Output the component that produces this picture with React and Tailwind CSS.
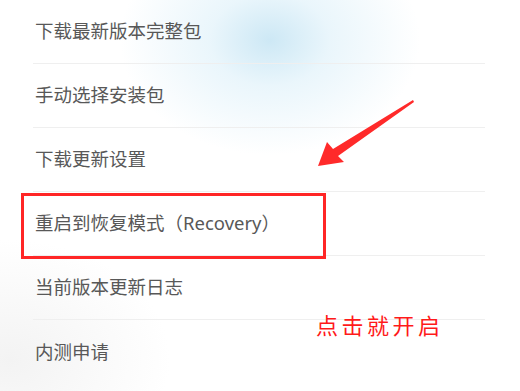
import React from 'react';

const items = [
  '下载最新版本完整包',
  '手动选择安装包',
  '下载更新设置',
  '重启到恢复模式（Recovery）',
  '当前版本更新日志',
  '内测申请',
];

const Arrow = () => (
  <svg className="absolute left-0 top-0" width="520" height="391" viewBox="0 0 520 391">
    <polygon
      points="413,100 333,149 327,142 318,166 344,162 338,156 414,102"
      fill="#ff2a2a"
    />
  </svg>
);

export default function App() {
  return (
    <div
      className="relative w-[520px] h-[391px] overflow-hidden bg-white"
      style={{ fontFamily: '"Noto Sans", "Noto Sans CJK SC", sans-serif' }}
    >
      {/* soft glow behind the list */}
      <div className="absolute inset-0 bg-[radial-gradient(ellipse_150px_115px_at_270px_40px,#cde8f5_0%,rgba(225,242,250,0.7)_40%,rgba(255,255,255,0)_100%)]"></div>
      <div className="absolute inset-0 bg-[radial-gradient(ellipse_160px_120px_at_10px_360px,#f3f3f3_0%,rgba(255,255,255,0)_100%)]"></div>

      <div className="relative flex flex-col">
        {items.map((label, i) => (
          <div
            key={label}
            className={`ml-[33px] mr-[35px] h-[64px] flex items-center ${i < items.length - 1 ? 'border-b border-[#efefef]' : ''}`}
          >
            <span className="pl-[2px] text-[18.5px] text-[#585858] leading-none">{label}</span>
          </div>
        ))}
      </div>

      {/* highlight box */}
      <div className="absolute left-[21px] top-[193px] w-[305px] h-[66px] border-[3px] border-[#ff2626]"></div>

      <Arrow />

      <div
        className="absolute left-[316px] top-[313px] text-[22px] leading-none tracking-[3.5px] text-[#ff1a1a]"
        style={{ fontFamily: '"Noto Sans CJK SC", sans-serif' }}
      >
        点击就开启
      </div>
    </div>
  );
}
